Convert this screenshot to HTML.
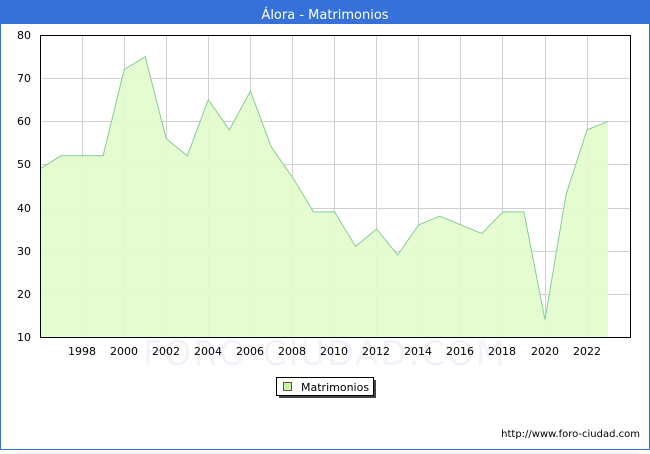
<!DOCTYPE html>
<html><head><meta charset="utf-8"><style>
body{margin:0;width:650px;height:450px;overflow:hidden;background:#fff;font-family:"DejaVu Sans","Liberation Sans",sans-serif;}
</style></head><body>
<svg width="650" height="450" xmlns="http://www.w3.org/2000/svg" font-family="DejaVu Sans, Liberation Sans, sans-serif">
<rect x="0.5" y="0.5" width="649" height="449" fill="#fff" stroke="#3571d8"/>
<rect x="0" y="0" width="650" height="24" fill="#3571d8"/>
<text x="325" y="19" fill="#fff" font-size="13" text-anchor="middle">Álora - Matrimonios</text>
<text x="325" y="365" fill="#f2f2fa" font-size="34" text-anchor="middle" letter-spacing="2">FORO-CIUDAD.COM</text>
<g stroke="#d0d0d0" stroke-width="1">
<line x1="40" y1="78.5" x2="630" y2="78.5"/><line x1="40" y1="121.5" x2="630" y2="121.5"/><line x1="40" y1="164.5" x2="630" y2="164.5"/><line x1="40" y1="208.5" x2="630" y2="208.5"/><line x1="40" y1="251.5" x2="630" y2="251.5"/><line x1="40" y1="294.5" x2="630" y2="294.5"/>
<line x1="82.5" y1="35" x2="82.5" y2="337"/><line x1="124.5" y1="35" x2="124.5" y2="337"/><line x1="166.5" y1="35" x2="166.5" y2="337"/><line x1="208.5" y1="35" x2="208.5" y2="337"/><line x1="250.5" y1="35" x2="250.5" y2="337"/><line x1="292.5" y1="35" x2="292.5" y2="337"/><line x1="334.5" y1="35" x2="334.5" y2="337"/><line x1="376.5" y1="35" x2="376.5" y2="337"/><line x1="418.5" y1="35" x2="418.5" y2="337"/><line x1="460.5" y1="35" x2="460.5" y2="337"/><line x1="502.5" y1="35" x2="502.5" y2="337"/><line x1="545.5" y1="35" x2="545.5" y2="337"/><line x1="587.5" y1="35" x2="587.5" y2="337"/>
</g>
<path d="M40,337 L40,168.8 61,155.8 82.1,155.8 103.1,155.8 124.2,69.5 145.2,56.6 166.2,138.6 187.3,155.8 208.3,99.7 229.4,129.9 250.4,91.1 271.4,147.2 292.5,177.4 313.5,211.9 334.6,211.9 355.6,246.4 376.6,229.1 397.7,255 418.7,224.8 439.8,216.2 460.8,224.8 481.8,233.5 502.9,211.9 523.9,211.9 545,319.7 566,194.6 587,129.9 608.1,121.3 608.1,337 Z" fill="#e2fccc" fill-opacity="0.9"/>
<polyline points="40,168.8 61,155.8 82.1,155.8 103.1,155.8 124.2,69.5 145.2,56.6 166.2,138.6 187.3,155.8 208.3,99.7 229.4,129.9 250.4,91.1 271.4,147.2 292.5,177.4 313.5,211.9 334.6,211.9 355.6,246.4 376.6,229.1 397.7,255 418.7,224.8 439.8,216.2 460.8,224.8 481.8,233.5 502.9,211.9 523.9,211.9 545,319.7 566,194.6 587,129.9 608.1,121.3" fill="none" stroke="#88cc99" stroke-width="1"/>
<rect x="40.5" y="35.5" width="590" height="302" fill="none" stroke="#000"/>
<g font-size="11" fill="#000" text-anchor="end">
<text x="31" y="39">80</text><text x="31" y="82">70</text><text x="31" y="125">60</text><text x="31" y="168">50</text><text x="31" y="212">40</text><text x="31" y="255">30</text><text x="31" y="298">20</text><text x="31" y="341">10</text>
</g>
<g font-size="11" fill="#000" text-anchor="middle">
<text x="82" y="355">1998</text><text x="124" y="355">2000</text><text x="166" y="355">2002</text><text x="208" y="355">2004</text><text x="250" y="355">2006</text><text x="292" y="355">2008</text><text x="334" y="355">2010</text><text x="376" y="355">2012</text><text x="418" y="355">2014</text><text x="460" y="355">2016</text><text x="502" y="355">2018</text><text x="545" y="355">2020</text><text x="587" y="355">2022</text>
</g>
<rect x="279" y="380" width="97" height="18" fill="#444"/>
<rect x="276.5" y="377.5" width="97" height="18" fill="#fff" stroke="#000"/>
<rect x="283.5" y="382.5" width="8" height="8" fill="#ccf5a0" stroke="#555"/>
<text x="301" y="391" font-size="11" fill="#000">Matrimonios</text>
<text x="640" y="437" font-size="10" fill="#000" text-anchor="end">http://www.foro-ciudad.com</text>
</svg>
</body></html>
